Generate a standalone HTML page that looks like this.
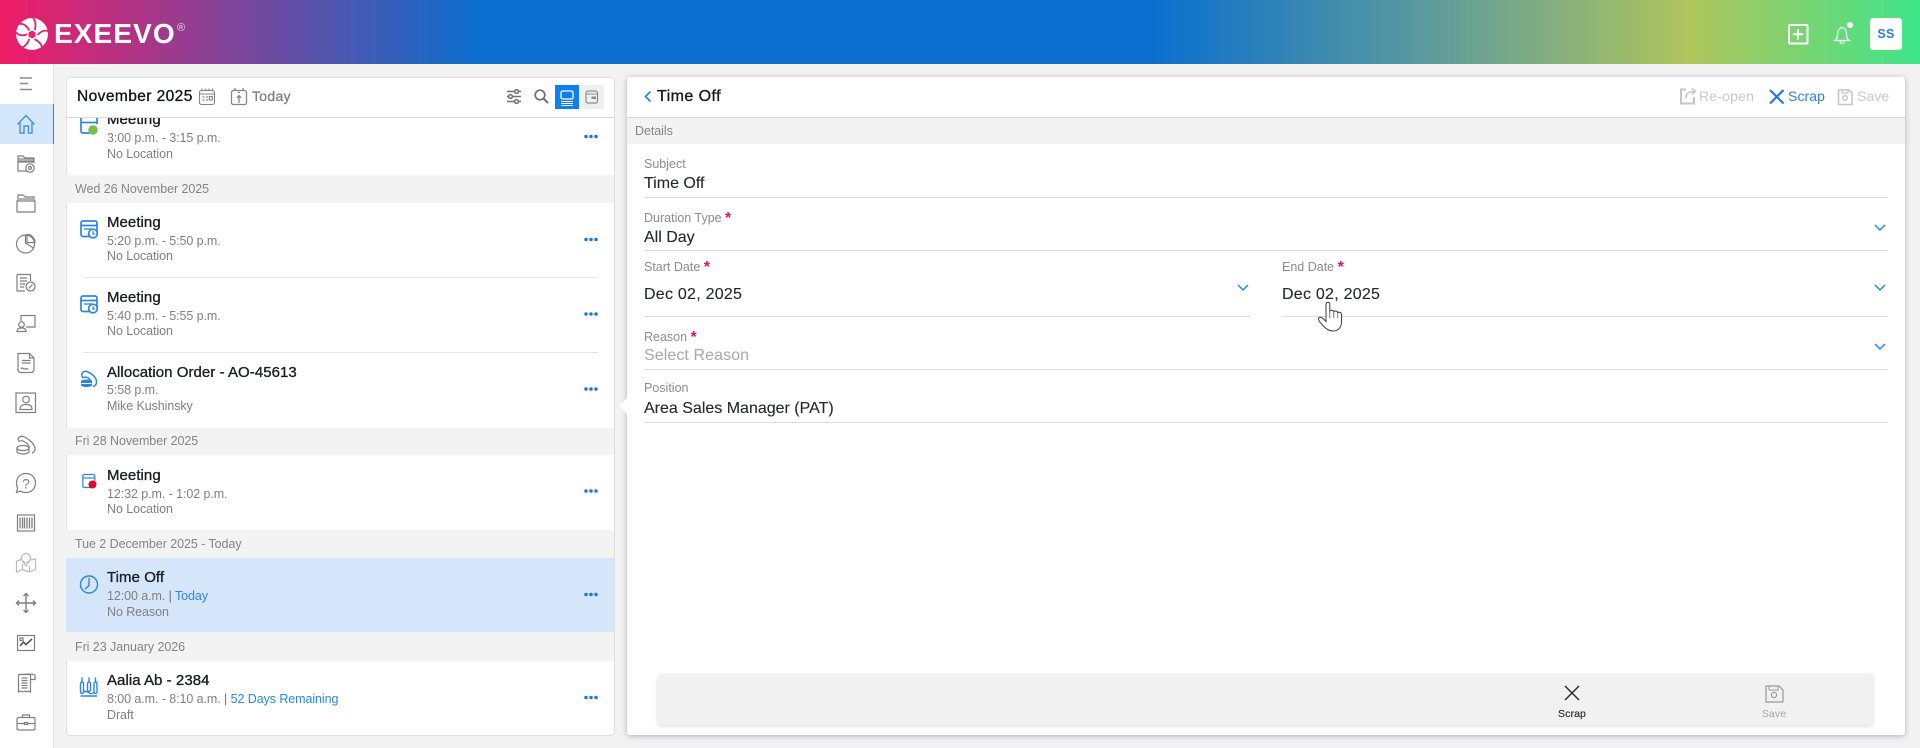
<!DOCTYPE html>
<html lang="en"><head><meta charset="utf-8"><title>Exeevo</title>
<style>
html,body{margin:0;padding:0;width:1920px;height:748px;overflow:hidden;background:#f2f2f3;font-family:"Liberation Sans",Arial,sans-serif}
.a{position:absolute}
.t{position:absolute;white-space:nowrap;line-height:20px;height:20px;letter-spacing:.25px}
.h{font-size:15px;color:#1d1f24;-webkit-text-stroke:.35px #1d1f24;letter-spacing:.05px}
.s{font-size:12.5px;color:#808080;letter-spacing:-.08px}
.b{font-size:12.5px;color:#858585;letter-spacing:-.06px}
.l{font-size:12.5px;color:#8c8c8c;letter-spacing:0}
.v{font-size:16px;color:#26282d;letter-spacing:0;-webkit-text-stroke:.12px #26282d}
.d{letter-spacing:.25px}
.ln{position:absolute;height:1px;background:#dcdcdc}
.band{position:absolute;left:66px;width:548px;background:#f3f3f3}
.lnk{color:#2a86e6}
.r{color:#e0106e;font-weight:700;font-size:16px;position:relative;top:1px;margin-left:-1px;line-height:10px}
</style></head><body>
<div class="a" style="left:0;top:0;width:1920px;height:64px;background:linear-gradient(90deg,#f01c66 0%,#a6378a 8%,#6d4ba2 14%,#0a6fce 25%,#0a6fce 60%,#5a9a9e 74%,#b0c45c 88%,#3fe58a 100%)"></div>
<div class="a" style="left:0;top:64px;width:53px;height:684px;background:#fff;border-right:1px solid #e2e2e2"></div>
<div class="a" style="left:0;top:104px;width:53px;height:40px;background:#d5e8fb;border-right:1px solid #2a86e6"></div>

<!-- left panel -->
<div class="a" style="left:66px;top:77px;width:547px;height:657px;background:#fff;border:1px solid #e0e0e0;border-radius:4px"></div>
<div class="a" style="left:66px;top:117px;width:548px;height:1px;background:#d9d9d9"></div>
<div class="band" style="top:175px;height:28px"></div>
<div class="band" style="top:428px;height:27px"></div>
<div class="band" style="top:530px;height:28px"></div>
<div class="band" style="top:558px;height:74px;background:#d5e6fa"></div>
<div class="band" style="top:632px;height:29px"></div>
<div class="ln" style="left:83px;top:277px;width:515px;background:#e4e4e4"></div>
<div class="ln" style="left:83px;top:352px;width:515px;background:#e4e4e4"></div>

<!-- right panel -->
<div class="a" style="left:627px;top:77px;width:1278px;height:658px;background:#fff;border-radius:3px;box-shadow:0 1px 6px rgba(0,0,0,.28)"></div>
<div class="a" style="left:627px;top:117px;width:1278px;height:27px;background:#f3f3f3;border-top:1px solid #d5d5d5;box-sizing:border-box"></div>
<div class="a" style="left:619px;top:397px;width:0;height:0;border-top:9px solid transparent;border-bottom:9px solid transparent;border-right:9px solid #fff"></div>
<div class="ln" style="left:644px;top:197px;width:1244px"></div>
<div class="ln" style="left:644px;top:250px;width:1244px"></div>
<div class="ln" style="left:644px;top:316px;width:606px"></div>
<div class="ln" style="left:1282px;top:316px;width:606px"></div>
<div class="ln" style="left:644px;top:369px;width:1244px"></div>
<div class="ln" style="left:644px;top:422px;width:1244px"></div>
<div class="a" style="left:658px;top:674px;width:1215px;height:51px;background:#f1f1f1;border-radius:4px;box-shadow:0 1px 4px rgba(0,0,0,.16)"></div>
<div class="a" style="left:555px;top:85px;width:24px;height:24px;background:#0f7fef"></div>
<div class="a" style="left:579px;top:85px;width:25px;height:24px;background:#efefef"></div>

<!-- all icons -->
<svg class="a" style="left:0;top:0" width="1920" height="748" viewBox="0 0 1920 748" fill="none">
<!-- logo -->
<circle cx="32" cy="34" r="16" fill="#fff"/>
<g stroke="#ee2068" stroke-width="1.800" fill="none" stroke-linecap="round">
<path d="M29 30C27 26 23 23 19.500 24"/><path d="M35 29.500C36 25.500 35.500 21 33 17.500"/><path d="M38 34.500C41 31.500 44.500 30 47.500 31"/><path d="M35 39.500C38.500 41 41 44 42 47"/><path d="M29 39.500C28 43 25.500 46 22 47.500"/><path d="M26.500 34.500C23 36 19.500 35.500 16.500 33"/>
</g>
<path d="M32 30.500L35.500 32.500L35.500 36.500L32 38.500L28.500 36.500L28.500 32.500Z" fill="#ee2068"/>
<!-- header icons -->
<rect x="1789" y="25" width="18.5" height="18.5" rx="1" stroke="#fff" stroke-width="2"/><path d="M1798 29v10.500M1792.800 34.300h10.500" stroke="#fff" stroke-width="2"/>
<path d="M1835 40.500c2-1.500 2.500-3 2.500-6.500c0-3.500 2-6.500 4.500-6.500s4.500 3 4.500 6.500c0 3.500.5 5 2.500 6.500zM1840 40.700c0 1.800 1 2.800 2 2.800s2-1 2-2.800" stroke="#fff" stroke-width="1.300"/>
<circle cx="1850" cy="25" r="3" fill="#fff"/>
<rect x="1870" y="18" width="32" height="32" rx="3" fill="#fff"/>

<!-- sidebar -->
<path d="M20 78h12M20 83.500h8M20 89.500h12" stroke="#8a8a8a" stroke-width="1.600"/>
<g stroke="#3e92ea" stroke-width="1.400"><path d="M17.500 124.500L26 115.500L34.500 124.500M20 122.500V133H24V126H28.500V133H32V122.500"/></g>
<g stroke="#7f7f7f" stroke-width="1.200">
<g transform="translate(26,164)"><path d="M-8 -2V-8H-3L-1 -6H8V-1M-8 -3H8M-8 -5H8"/><path d="M-8 -2V7H1M-8 -2H8"/><circle cx="4" cy="4" r="4.200"/><circle cx="4" cy="4" r="1.500"/></g>
<g transform="translate(26,204)"><path d="M-8 -3V-9H-3L-1 -7H8V-3M-7 -5H7M-9 -3H9V8H-9Z"/></g>
<g transform="translate(26,244)"><circle cx="-.5" cy="0" r="9"/><path d="M-.5 -9V-1L7.500 4M1 -9.500C6 -9.500 9 -5.500 9 -1.500H1Z"/></g>
<g transform="translate(26,283)"><path d="M-9 -8.500H4.500V-2M-9 -8.500V8H-1M-6 -5H1M-6 -2H1M-6 1H-1M-6 4H-2"/><circle cx="4.500" cy="3.500" r="4.500"/><path d="M2.500 5.500L6.500 1.500"/></g>
<g transform="translate(26,323)"><path d="M-5 -2V-7.500H9V4H0"/><circle cx="-4.500" cy="1.500" r="2.800"/><path d="M-9 8.500C-9 5.500 -7 5 -4.500 5S0 5.500 0 8.500Z"/></g>
<g transform="translate(26,363)"><path d="M-8 -9.500H3.500L8 -5V6.500Q8 9.500 5 9.500H-5Q-8 9.500 -8 6.500ZM3.500 -9.500V-5H8M-4 -2.500H4.500M-4 0H4.500"/><path d="M-5 6C-3 3 -3 7 -1 6S1 6 2 6"/></g>
<g transform="translate(26,403)"><rect x="-10" y="-10" width="19.500" height="19.500"/><circle cx="0" cy="-3.500" r="3.300"/><path d="M-6 6.500C-6 2 -3 1.500 0 1.500S6 2 6 6.500Z"/></g>
<g transform="translate(26,445)"><path d="M-7 -3.500C-9.500 -7 -6 -9.500 -2.500 -8.500C2 -6.500 8 -2 9 3C9.500 5.500 8 7.500 6 8"/><path d="M-7 -3.500C-3 -6 3 -1 3.500 3"/><ellipse cx="-3" cy="3" rx="6" ry="2.500"/><path d="M-9 3V6.500C-9 8 -6 9 -3 9S3 8 3 6.500V3"/></g>
<g transform="translate(26,483)"><path d="M-9.500 0C-9.500 -5.500 -5.500 -9.500 0 -9.500S9.500 -5.500 9.500 0S5.500 9.500 0 9.500Q-4 9.500 -6 8L-9.500 9.500L-8.500 5Q-9.500 3 -9.500 0Z"/></g>
<g transform="translate(26,523)"><rect x="-8.500" y="-8" width="17" height="16"/><path d="M-6 -5.500V5.500M-3.500 -5.500V5.500M-1.500 -5.500V5.500M1 -5.500V5.500M3.500 -5.500V5.500M6 -5.500V5.500" stroke-width="1.300"/></g>
<g transform="translate(26,563)" stroke="#b9b9b9"><path d="M-9.500 -2V9L-3.500 6.500L3.500 9L9.500 6.500V-4L5 -3M-9.500 -2L-4.500 -3.500M-3.500 1V6.500M3.500 3V9"/><circle cx="0" cy="-5" r="4.500"/><path d="M-3.500 -2L0 3L3.500 -2"/></g>
<g transform="translate(26,603)"><path d="M0 -9.500V9.500M-9.500 0H9.500M-2.500 -7L0 -9.500L2.500 -7M-2.500 7L0 9.500L2.500 7M-7 -2.500L-9.500 0L-7 2.500M7 -2.500L9.500 0L7 2.500" stroke-width="1.400"/></g>
<g transform="translate(26,643)"><rect x="-8.500" y="-7.500" width="17" height="15"/><path d="M-6 3L-2.500 -1L0 1.500L6 -4" stroke-width="1.600" stroke="#555"/><path d="M-6 -5H-3V-2.500H-6Z"/></g>
<g transform="translate(26,683)"><path d="M-7.500 -8.500V9L-5.500 8L-3.500 9L-1.500 8L.5 9L2.500 8L4.500 9V-8.500H-7.500Q7 -9.500 9 -8V-3.500H4.500M-4.500 -5H1.500M-4.500 -2.500H1.500M-4.500 0H1.500M-4.500 2.500H1.500M-4.500 5H1.500"/></g>
<g transform="translate(26,723)"><rect x="-9" y="-5.500" width="18" height="12.500" rx="1.500"/><path d="M-3.500 -5.500V-8H3.500V-5.500M-9 .5H-1.500M1.500 .5H9"/><rect x="-1.500" y="-.5" width="3" height="2"/></g>
</g>
<text x="26" y="488.500" font-family="Liberation Sans" font-size="14" fill="#7f7f7f" text-anchor="middle">?</text>

<!-- left panel head -->
<g stroke="#858585" stroke-width="1.100">
<rect x="199.500" y="90.500" width="15" height="14" rx="2"/><path d="M202 88.500v2.500M205.500 88.500v2.500M209 88.500v2.500M212.500 88.500v2.500M199.500 94h15" /><path d="M202.500 97h2M206 97h2M202.500 100h2M206 100h2" stroke-width="1.200"/><rect x="209.300" y="96.500" width="3" height="3.500" stroke-width="1.100"/>
<rect x="231.500" y="90.500" width="15" height="14" rx="2" stroke-width="1.300"/><path d="M235 88v3M243 88v3M239 103V96M237 98l2-2.500 2 2.500M238 92.500h2" stroke-width="1.300"/>
</g>
<g stroke="#707070" stroke-width="1.500"><path d="M507 91.500H521M507 96.500H521M507 101.500H521"/><circle cx="516.500" cy="91.500" r="1.900" fill="#fff"/><circle cx="510.500" cy="96.500" r="1.900" fill="#fff"/><circle cx="516.500" cy="101.500" r="1.900" fill="#fff"/></g>
<circle cx="540" cy="95" r="4.800" stroke="#6f6f6f" stroke-width="1.700"/><path d="M543.500 98.500L548 103" stroke="#6f6f6f" stroke-width="2"/>
<g stroke="#fff" stroke-width="1.300"><rect x="561" y="91" width="12" height="8" rx="1.500"/><path d="M561 101.500h12M561 103.500h12M561 105.500h12" stroke-width="1"/></g>
<rect x="586" y="91" width="11.500" height="12" rx="2" stroke="#8c8c8c" stroke-width="1.200"/><path d="M586 94h11.500" stroke="#8c8c8c"/><rect x="591.500" y="96.500" width="4.500" height="2.500" fill="#8c8c8c"/>

<!-- item icons -->
<g stroke="#2a86e6" stroke-width="1.700">
<path d="M81 118V131Q81 133 83 133H90M97 118V124" /><path d="M81 122.500H97"/>
<g><rect x="81" y="221" width="16" height="15.500" rx="2"/><path d="M81 225.500H97"/><path d="M84 229H92" stroke-width="1.300"/></g>
<circle cx="93" cy="233.500" r="4.300" fill="#fff"/><path d="M93 231V234H95"  stroke-width="1.200"/>
<g><rect x="81" y="296" width="16" height="15.500" rx="2"/><path d="M81 300.500H97"/><path d="M84 304H92" stroke-width="1.300"/></g>
<circle cx="93" cy="308.500" r="4.300" fill="#fff"/><path d="M93 306V309H95" stroke-width="1.200"/>
<path d="M83 378C80 374 83 370.500 87 371.500C91 373 96.500 377 96.500 382C96.500 384.500 95 386 93 386.500" stroke-width="1.500"/><path d="M83 378C86 375.500 91 379 91.500 382.500" stroke-width="1.500"/>
<path d="M81 381.500C81 380 84 379.500 86.500 379.500S92 380 92 381.500V385C92 386.500 89 387 86.500 387S81 386.500 81 385Z" fill="#2a86e6" stroke="none"/><path d="M81.500 383.500H91.500" stroke="#fff" stroke-width="1"/>
<rect x="82.800" y="474.500" width="12" height="13" rx="1.500" stroke-width="1.200"/><path d="M82.800 478H94.800" stroke-width="1.200"/>
<circle cx="89" cy="584.500" r="8.500" stroke-width="1.400"/><path d="M89 578V585.500L85 589" stroke-width="1.400"/>
<g stroke-width="1.400"><path d="M82 677.500V682M89 677.500V682M95.500 677.500V682"/><rect x="80.500" y="682" width="3" height="11.500" rx="1.500"/><rect x="87.500" y="682" width="3" height="9.500" rx="1.500"/><rect x="94" y="682" width="3" height="11.500" rx="1.500"/><path d="M83 692.500C84 691 87 691 88.500 692.500C90 694 92 694 94 692.500M80.500 696H97"/></g>
</g>
<circle cx="93" cy="130" r="4.700" fill="#77c043"/>
<circle cx="92.500" cy="484.500" r="4" fill="#e6002d"/>

<!-- dots -->
<g fill="#1f78dd"><circle cx="586" cy="136.500" r="1.800"/><circle cx="591" cy="136.500" r="1.800"/><circle cx="596" cy="136.500" r="1.800"/>
<circle cx="586" cy="239.500" r="1.800"/><circle cx="591" cy="239.500" r="1.800"/><circle cx="596" cy="239.500" r="1.800"/>
<circle cx="586" cy="314" r="1.800"/><circle cx="591" cy="314" r="1.800"/><circle cx="596" cy="314" r="1.800"/>
<circle cx="586" cy="389" r="1.800"/><circle cx="591" cy="389" r="1.800"/><circle cx="596" cy="389" r="1.800"/>
<circle cx="586" cy="491" r="1.800"/><circle cx="591" cy="491" r="1.800"/><circle cx="596" cy="491" r="1.800"/>
<circle cx="586" cy="594.500" r="1.800"/><circle cx="591" cy="594.500" r="1.800"/><circle cx="596" cy="594.500" r="1.800"/>
<circle cx="586" cy="697.500" r="1.800"/><circle cx="591" cy="697.500" r="1.800"/><circle cx="596" cy="697.500" r="1.800"/></g>

<!-- right panel icons -->
<path d="M650.500 91.500L645.500 96.500L650.500 101.500" stroke="#2a86e6" stroke-width="1.700"/>
<path d="M1686 89.500H1681V103.500H1694V97" stroke="#c6c6c6" stroke-width="2"/><path d="M1686 98C1686 93 1689 91.500 1695 91.500M1692 88.500L1695.500 91.500L1692 94.500" stroke="#c6c6c6" stroke-width="1.500"/>
<path d="M1770 90L1783.500 103.500M1783.500 90L1770 103.500" stroke="#1f78dd" stroke-width="2.200"/>
<path d="M1838.500 90H1849L1852 93V104.500H1838.500Z" stroke="#c6c6c6" stroke-width="1.600"/><path d="M1842 90V93H1848V90" stroke="#c6c6c6" stroke-width="1.200"/><circle cx="1845" cy="98" r="2.300" stroke="#c6c6c6" stroke-width="1.500"/>
<g stroke="#2a86e6" stroke-width="1.500"><path d="M1238 285L1243 290L1248 285"/><path d="M1875 285L1880 290L1885 285"/><path d="M1875 225L1880 230L1885 225"/><path d="M1875 344L1880 349L1885 344"/></g>
<path d="M1565 686L1579 700M1579 686L1565 700" stroke="#2d2d2d" stroke-width="1.500"/>
<path d="M1766 686H1779L1783 690V702H1766Z" stroke="#9a9a9a" stroke-width="1.200"/><path d="M1769 686V690H1778V686" stroke="#9a9a9a"/><circle cx="1774" cy="695" r="2.600" stroke="#9a9a9a" stroke-width="1.200"/>
</svg>

<!-- text -->
<div class="t" style="left:54px;top:22px;height:24px;line-height:24px;font-size:28px;font-weight:700;color:#fff;letter-spacing:1.1px">EXEEVO</div>
<div class="t" style="left:177px;top:21px;height:14px;line-height:14px;font-size:11px;color:#fff;opacity:.8">®</div>
<div class="t" style="left:1870px;top:24px;width:32px;text-align:center;font-size:12.5px;font-weight:700;color:#2a7fe0">SS</div>

<div class="t" style="left:77px;top:87px;font-size:15.500px;color:#15171c;-webkit-text-stroke:.35px #15171c;letter-spacing:.42px">November 2025</div>
<div class="t" style="left:252px;top:86px;font-size:14px;color:#7f7f7f;-webkit-text-stroke:.3px #7f7f7f;letter-spacing:.3px">Today</div>

<div class="a" style="left:107px;top:118px;width:100px;height:14px;overflow:hidden"><div class="t h" style="left:0;top:-8px">Meeting</div></div>
<div class="t s" style="left:107px;top:128px">3:00 p.m. - 3:15 p.m.</div>
<div class="t s" style="left:107px;top:144px">No Location</div>
<div class="t b" style="left:75px;top:179px">Wed 26 November 2025</div>
<div class="t h" style="left:107px;top:213px">Meeting</div>
<div class="t s" style="left:107px;top:231px">5:20 p.m. - 5:50 p.m.</div>
<div class="t s" style="left:107px;top:246px">No Location</div>
<div class="t h" style="left:107px;top:288px">Meeting</div>
<div class="t s" style="left:107px;top:306px">5:40 p.m. - 5:55 p.m.</div>
<div class="t s" style="left:107px;top:321px">No Location</div>
<div class="t h" style="left:107px;top:363px">Allocation Order - AO-45613</div>
<div class="t s" style="left:107px;top:380px">5:58 p.m.</div>
<div class="t s" style="left:107px;top:396px">Mike Kushinsky</div>
<div class="t b" style="left:75px;top:431px">Fri 28 November 2025</div>
<div class="t h" style="left:107px;top:466px">Meeting</div>
<div class="t s" style="left:107px;top:484px">12:32 p.m. - 1:02 p.m.</div>
<div class="t s" style="left:107px;top:499px">No Location</div>
<div class="t b" style="left:75px;top:534px">Tue 2 December 2025 - Today</div>
<div class="t h" style="left:107px;top:568px">Time Off</div>
<div class="t s" style="left:107px;top:586px">12:00 a.m. <span style="color:#707070">|</span> <span class="lnk">Today</span></div>
<div class="t s" style="left:107px;top:602px">No Reason</div>
<div class="t b" style="left:75px;top:637px">Fri 23 January 2026</div>
<div class="t h" style="left:107px;top:671px">Aalia Ab - 2384</div>
<div class="t s" style="left:107px;top:689px">8:00 a.m. - 8:10 a.m. <span style="color:#707070">|</span> <span class="lnk">52 Days Remaining</span></div>
<div class="t s" style="left:107px;top:705px">Draft</div>

<div class="t" style="left:657px;top:87px;font-size:16px;color:#15171c;-webkit-text-stroke:.35px #15171c;letter-spacing:.45px">Time Off</div>
<div class="t" style="left:1699px;top:86px;font-size:14px;color:#c8c8c8;letter-spacing:.2px">Re-open</div>
<div class="t" style="left:1788px;top:86px;font-size:14px;color:#2a80e0;letter-spacing:.1px">Scrap</div>
<div class="t" style="left:1857px;top:86px;font-size:14px;color:#c8c8c8;letter-spacing:.1px">Save</div>
<div class="t b" style="left:635px;top:121px">Details</div>

<div class="t l" style="left:644px;top:154px">Subject</div>
<div class="t v" style="left:644px;top:174px">Time Off</div>
<div class="t l" style="left:644px;top:208px">Duration Type<span class="r"> *</span></div>
<div class="t v" style="left:644px;top:228px">All Day</div>
<div class="t l" style="left:644px;top:257px">Start Date<span class="r"> *</span></div>
<div class="t v d" style="left:644px;top:285px">Dec 02, 2025</div>
<div class="t l" style="left:1282px;top:257px">End Date<span class="r"> *</span></div>
<div class="t v d" style="left:1282px;top:285px">Dec 02, 2025</div>
<div class="t l" style="left:644px;top:327px">Reason<span class="r"> *</span></div>
<div class="t v" style="left:644px;top:346px;color:#a8a8a8;-webkit-text-stroke:0;letter-spacing:.08px">Select Reason</div>
<div class="t l" style="left:644px;top:378px">Position</div>
<div class="t v" style="left:644px;top:399px">Area Sales Manager (PAT)</div>

<div class="t" style="left:1542px;width:60px;text-align:center;top:704px;font-size:10.500px;color:#333;-webkit-text-stroke:.2px #333;letter-spacing:.1px">Scrap</div>
<div class="t" style="left:1744px;width:60px;text-align:center;top:704px;font-size:10.500px;color:#a5a5a5;letter-spacing:.1px">Save</div>

<svg class="a" style="left:1315px;top:298px" width="32" height="36" viewBox="1315 298 32 36" fill="none">
<path d="M1326 304.500C1326 301.500 1329.800 301.500 1329.800 304.500V311.500C1330 309.800 1333.500 309.800 1333.800 312C1334 310.500 1337.500 310.500 1337.800 313C1338.200 311.500 1341.500 312 1341.500 314.500V322C1341.500 327.500 1338 331 1333 331C1328.500 331 1326 328.500 1322.500 325C1320 322.500 1318.500 320.500 1318.500 319C1318.500 317 1321 316.500 1323 318.500L1326 321.500Z" fill="#fff" stroke="#3c3c3c" stroke-width="1"/>
<path d="M1329.800 311.500V318M1333.800 312V318M1337.800 313V318" stroke="#3c3c3c" stroke-width=".7"/>
</svg>
</body></html>
